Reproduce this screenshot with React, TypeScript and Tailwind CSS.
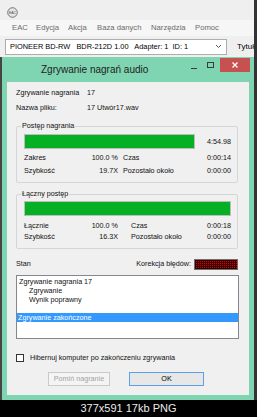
const EacIcon = () => (
  <svg width="11" height="11" viewBox="0 0 11 11">
    <circle cx="5.5" cy="5.5" r="4.8" fill="#e4e4e4" stroke="#6a6a6a" strokeWidth="0.9" />
    <text x="5.5" y="6.8" fontSize="3.4" textAnchor="middle" fill="#4a4a4a" fontFamily="Liberation Sans, Arial, sans-serif">
      EAC
    </text>
  </svg>
);

const Stat = ({ a, av, b, bv, gap }: { a: string; av: string; b: string; bv: string; gap: string }) => (
  <div className="flex h-[10px]">
    <div className="w-[94px] flex justify-between">
      <span>{a}</span>
      <span>{av}</span>
    </div>
    <div className={`${gap} flex-1 flex justify-between`}>
      <span>{b}</span>
      <span>{bv}</span>
    </div>
  </div>
);

export default function App() {
  return (
    <div className="w-[257px] h-[417px] bg-black flex flex-col overflow-hidden font-['Liberation_Sans',Arial,sans-serif] text-[#111]">
      <div className="flex h-[400px]">
        <div className="w-[254px] flex flex-col">
          {/* main EAC window behind the dialog */}
          <div className="h-[57px] bg-[#efefef] flex flex-col overflow-hidden">
            <div className="h-[20px] pl-[7px] pt-[7px]">
              <EacIcon />
            </div>
            <div className="h-[16px] bg-[#f6f6f6] flex items-center pl-[12px] text-[7.7px] text-[#6b6b6b]">
              <span className="w-[24px]">EAC</span>
              <span className="w-[32px]">Edycja</span>
              <span className="w-[29px]">Akcja</span>
              <span className="w-[54px]">Baza danych</span>
              <span className="w-[44px]">Narzędzia</span>
              <span>Pomoc</span>
            </div>
            <div className="h-[21px] flex items-center pl-[5px]">
              <div className="w-[223px] h-[16px] bg-white border border-[#adadad] flex items-center pl-[4px] pr-[4px]">
                <span className="flex-1 whitespace-pre text-[7.4px] text-black">
                  PIONEER BD-RW   BDR-212D 1.00   Adapter: 1  ID: 1
                </span>
                <svg width="7" height="5" viewBox="0 0 7 5">
                  <path d="M1 1 L3.5 3.5 L6 1" fill="none" stroke="#555" strokeWidth="1" />
                </svg>
              </div>
              <span className="ml-[10px] text-[8px] text-black">Tytuł</span>
            </div>
          </div>

          <div className="flex flex-1">
            <div className="w-[2px] bg-[#454545]" />
            <div className="w-[252px] bg-[#7fd4b2] flex flex-col">
              {/* title bar */}
              <div className="h-[25px] flex">
                <div className="pl-[39px] flex items-center text-[10px] text-[#222]">Zgrywanie nagrań audio</div>
                <div className="ml-auto mr-[4px] mt-[1px] flex items-start">
                  <div className="w-[6px] h-[1px] bg-[#3b3b3b] mt-[10px]" />
                  <div className="ml-[10px] mt-[4px] w-[7px] h-[6px] border border-[#3b3b3b]" />
                  <div className="ml-[6px] w-[30px] h-[14px] bg-[#c75050] flex items-center justify-center">
                    <svg width="6" height="6" viewBox="0 0 6 6">
                      <path d="M0.5 0.5 L5.5 5.5 M5.5 0.5 L0.5 5.5" stroke="#fff" strokeWidth="1.3" />
                    </svg>
                  </div>
                </div>
              </div>

              {/* dialog body */}
              <div className="mx-[5px] h-[313px] bg-[#f0f0f0] flex flex-col pl-[9px] pr-[10px] text-[7.2px] leading-[10px]">
                <div className="mt-[6px] h-[10px] flex">
                  <span className="w-[71px]">Zgrywanie nagrania</span>
                  <span>17</span>
                </div>
                <div className="mt-[5px] h-[10px] flex">
                  <span className="w-[71px]">Nazwa pliku:</span>
                  <span>17 Utwór17.wav</span>
                </div>

                <fieldset className="mt-[8px] w-[222px] border border-[#d5d5d5] rounded-[2px] pl-[7px] pr-[6px] pb-[6px]">
                  <legend className="ml-[-3px] px-[1px] leading-[10px]">Postęp nagrania</legend>
                  <div className="mt-[3px] h-[15px] flex items-center">
                    <div className="w-[171px] h-[15px] border border-[#bcbcbc] bg-[#06b025]" />
                    <span className="ml-auto">4:54.98</span>
                  </div>
                  <div className="mt-[4px]">
                    <Stat a="Zakres" av="100.0 %" b="Czas" bv="0:00:14" gap="ml-[5px]" />
                  </div>
                  <div className="mt-[3px]">
                    <Stat a="Szybkość" av="19.7X" b="Pozostało około" bv="0:00:00" gap="ml-[5px]" />
                  </div>
                </fieldset>

                <fieldset className="mt-[6px] w-[222px] border border-[#d5d5d5] rounded-[2px] pl-[7px] pr-[6px] pb-[6px]">
                  <legend className="ml-[-3px] px-[1px] leading-[10px]">Łączny postęp</legend>
                  <div className="mt-[2px] h-[15px] border border-[#bcbcbc] bg-[#06b025]" />
                  <div className="mt-[5px]">
                    <Stat a="Łącznie" av="100.0 %" b="Czas" bv="0:00:18" gap="ml-[13px]" />
                  </div>
                  <div className="mt-[1px]">
                    <Stat a="Szybkość" av="16.3X" b="Pozostało około" bv="0:00:00" gap="ml-[13px]" />
                  </div>
                </fieldset>

                <div className="mt-[9px] h-[12px] flex items-center">
                  <span>Stan</span>
                  <span className="ml-auto">Korekcja błędów:</span>
                  <div className="ml-[3px] mr-[1px] w-[44px] h-[11px] border border-[#6e6e6e] bg-[#d40000] bg-[linear-gradient(90deg,#3a0000_1px,transparent_1px),linear-gradient(#3a0000_1px,transparent_1px)] bg-[length:2px_2px]" />
                </div>

                <div className="mt-[5px] h-[64px] w-[223px] bg-white border border-[#828790] pt-[1px] leading-[9px]">
                  <div className="pl-[2px]">Zgrywanie nagrania 17</div>
                  <div className="pl-[12px]">Zgrywanie</div>
                  <div className="pl-[12px]">Wynik poprawny</div>
                  <div className="h-[9px]" />
                  <div className="pl-[1px] bg-[#3399ff] text-white">Zgrywanie zakończone</div>
                </div>

                <div className="mt-[14px] h-[10px] flex items-center">
                  <div className="w-[8px] h-[8px] border border-[#333] bg-white" />
                  <span className="ml-[6px]">Hibernuj komputer po zakończeniu zgrywania</span>
                </div>

                <div className="mt-[9px] flex pl-[32px]">
                  <div className="w-[62px] h-[14px] border border-[#cacaca] bg-[#f4f4f4] text-[#a3a3a3] flex items-center justify-center">
                    Pomiń nagranie
                  </div>
                  <div className="ml-[19px] w-[75px] h-[14px] border border-[#5aa0e6] bg-[#e7e7e7] flex items-center justify-center text-black">
                    OK
                  </div>
                </div>
              </div>
            </div>
          </div>
        </div>
        <div className="w-[3px] bg-[#333333]" />
      </div>
      <div className="h-[17px] flex items-center justify-center text-[11px] text-[#ececec]">377x591 17kb PNG</div>
    </div>
  );
}
